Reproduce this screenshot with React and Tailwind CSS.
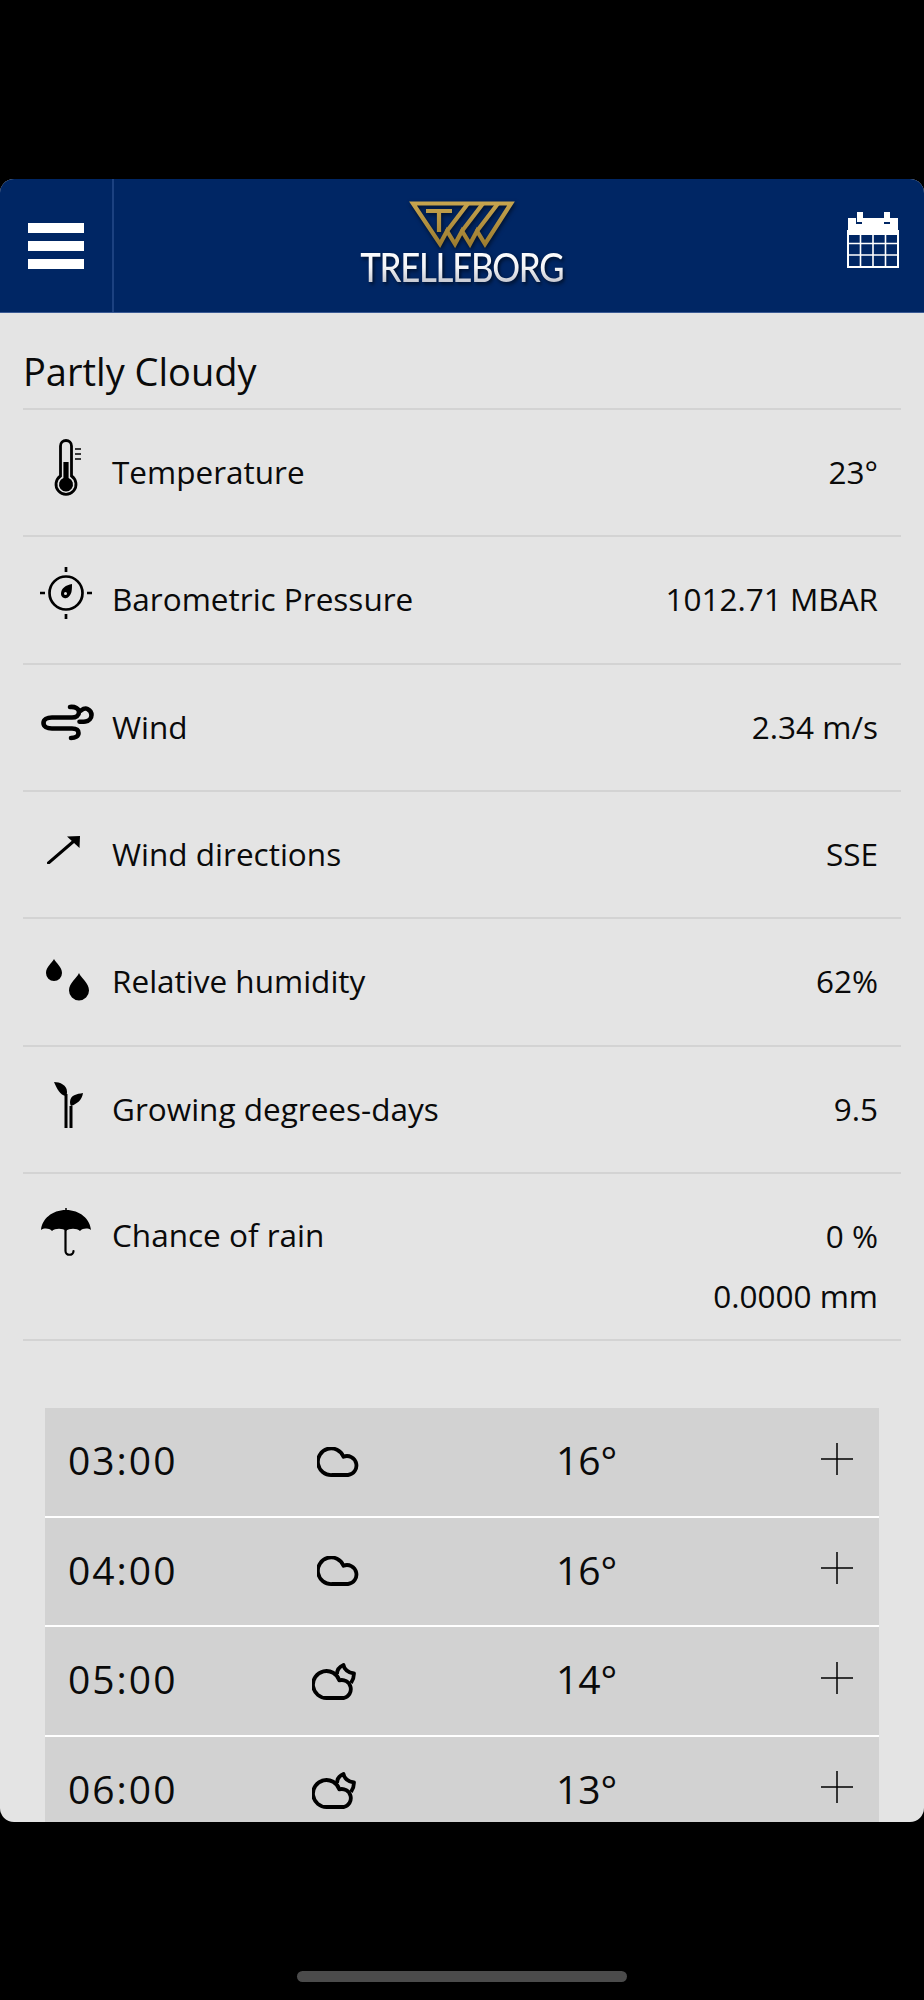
const FONT = "font-['Open_Sans',sans-serif]";

const metrics = [
  { id: 'temp', label: 'Temperature', value: ['23°'], h: 'h-[127px]', icon: <Thermometer /> },
  { id: 'baro', label: 'Barometric Pressure', value: ['1012.71 MBAR'], h: 'h-[128px]', icon: <Gauge /> },
  { id: 'wind', label: 'Wind', value: ['2.34 m/s'], h: 'h-[127px]', icon: <Wind /> },
  { id: 'dir', label: 'Wind directions', value: ['SSE'], h: 'h-[127px]', icon: <Arrow /> },
  { id: 'hum', label: 'Relative humidity', value: ['62%'], h: 'h-[128px]', icon: <Drops /> },
  { id: 'gdd', label: 'Growing degrees-days', value: ['9.5'], h: 'h-[127px]', icon: <Sprout /> },
];

const hours = [
  { time: '03:00', temp: '16°', icon: <Cloud /> },
  { time: '04:00', temp: '16°', icon: <Cloud /> },
  { time: '05:00', temp: '14°', icon: <CloudMoon /> },
  { time: '06:00', temp: '13°', icon: <CloudMoon /> },
];

function Thermometer() {
  return (
    <svg className="mb-[10px]" width="30" height="57" viewBox="0 0 30 57" fill="none" stroke="#000">
      <path d="M9.500 37V7a5.500 5.500 0 0 1 11 0v30a10 10 0 1 1-11 0Z" strokeWidth="2.800" />
      <path d="M12.400 23h5.200v15.900a7 7 0 1 1-5.200 0Z" fill="#000" stroke="none" />
      <path d="M24 10h6M24 15h6M24 20h6" strokeWidth="1.700" />
    </svg>
  );
}

function Gauge() {
  return (
    <svg className="mb-[14px]" width="54" height="54" viewBox="0 0 54 54" fill="none" stroke="#000">
      <circle cx="27" cy="27" r="16.500" strokeWidth="2.700" />
      <path d="M27 1v5M27 48v5M1 27h5M48 27h5" strokeWidth="2.700" />
      <path d="M33 18c-6 1-11 4-11 10a4.500 4.500 0 0 0 8 2.500c3-3 3-7 3-12.500Z" fill="#000" stroke="none" />
      <circle cx="26.500" cy="27.500" r="1.500" fill="#e4e4e4" stroke="none" />
    </svg>
  );
}

function Wind() {
  return (
    <svg className="mb-[10px] ml-[3px]" width="54" height="38" viewBox="0 0 54 38" fill="none" stroke="#000" strokeWidth="4.600" strokeLinecap="round">
      <path d="M29 3c5-.5 9 1.500 9 5s-3 5.500-7 5.500H11c-5 0-8.500 2-8.500 5.500S6 24.500 11 24.500h20c4 0 6.500 1.500 6.500 4.500s-3 5-7.500 5" />
      <path d="M40 6.500c2-1.500 4.500-2.500 6.500-1.500s4 3 4 6-2.500 6-6 6.500c-2 .3-4 .3-6 .2" />
    </svg>
  );
}

function Arrow() {
  return (
    <svg className="mb-[10px] mr-[5px]" width="33" height="28" viewBox="0 0 33 28" fill="none">
      <path d="M1.500 27 27 5" stroke="#000" strokeWidth="3" strokeLinecap="round" />
      <path d="M20 .5 33 0l-.5 12Z" fill="#000" />
    </svg>
  );
}

function Drops() {
  return (
    <svg className="ml-[4px] mb-[2px]" width="46" height="44" viewBox="0 0 46 44" fill="#000">
      <path d="M9 0c2 4 8 8 8 14a8 8 0 0 1-16 0C1 8 7 4 9 0Z" />
      <path d="M34 14c2 5 10 10 10 17.500a10 10 0 0 1-20 0c0-7.500 8-12.500 10-17.500Z" />
    </svg>
  );
}

function Sprout() {
  return (
    <svg className="mb-[10px] ml-[5px]" width="29" height="46" viewBox="0 0 29 46" fill="#000">
      <path d="M0 0c6 0 13 3 13 10 0 2-.5 3-1 4C6 13 3 7 0 0Z" />
      <path d="M29 11c-6 1-13 2-13 9 0 2 .5 3 1 4 6-2 11-6 12-13Z" />
      <path d="M10.500 12h3v34h-3zM15.500 24h3v22h-3z" />
    </svg>
  );
}

function Umbrella() {
  return (
    <svg width="52" height="50" viewBox="0 0 52 50" fill="none">
      <path d="M26 2C12 2 2 11 1 22c3-2 8-2 11 1 3-3 11-3 14 0 3-3 11-3 14 0 3-3 8-3 11-1C50 11 40 2 26 2Z" fill="#000" />
      <path d="M26 0v3" stroke="#000" strokeWidth="1.500" />
      <path d="M25.500 22v21c0 5 8 5 8 0" stroke="#000" strokeWidth="2.200" strokeLinecap="round" />
    </svg>
  );
}

function Cloud() {
  return (
    <svg className="ml-[2px]" width="42" height="30" viewBox="0 0 42 30" fill="none" stroke="#000" strokeWidth="3.800" strokeLinejoin="round">
      <path d="M15 28A13.300 13.300 0 1 1 26.500 9.700 9.500 9.500 0 1 1 31 28Z" />
    </svg>
  );
}

function CloudMoon() {
  return (
    <svg className="mr-[6px] mt-[1px]" width="44" height="37" viewBox="0 0 44 37" fill="none" stroke="#000" strokeWidth="3.800" strokeLinejoin="round">
      <path d="M15 35A13.500 13.500 0 1 1 27.300 17.300 9 9 0 1 1 32 35Z" />
      <path d="M25 11C25 7 28 3.500 31.500 2 32 6 36 10 42 10.500 42 14 41 17 39 20" />
    </svg>
  );
}

function Emblem() {
  return (
    <svg width="112" height="54" viewBox="0 0 112 54" fill="none" className="drop-shadow-[1px_2px_2px_rgba(0,0,0,0.6)]">
      <defs>
        <linearGradient id="gold" gradientUnits="userSpaceOnUse" x1="0" y1="2" x2="0" y2="50">
          <stop offset="0" stopColor="#c8a650" />
          <stop offset="1" stopColor="#9a7a2e" />
        </linearGradient>
      </defs>
      <g stroke="url(#gold)" strokeWidth="4.200" strokeLinejoin="miter" strokeLinecap="butt">
        <path d="M7 5.500H105L79 46 71 33 64 46 56 33 49 46 41 33 34 46Z" />
        <path d="M20 13H46M33 13V34" />
        <path d="M62 5.500 41 33M77 5.500 56 33M92 5.500 71 33" />
      </g>
    </svg>
  );
}

function Calendar() {
  return (
    <svg width="52" height="56" viewBox="0 0 52 56" fill="none">
      <path d="M1 6h8v6h6V6h22v6h6V6h8v17H1Z" fill="#fff" />
      <path d="M10 0h6v10h-6zM37 0h6v10h-6z" fill="#fff" />
      <path d="M1 19h50v36H1Z" stroke="#fff" strokeWidth="2" />
      <path d="M13.500 22v32M26 22v32M38.500 22v32M1 31.500h50M1 43h50" stroke="#fff" strokeWidth="1.600" />
    </svg>
  );
}

function Row({ icon, label, value, h }) {
  return (
    <div className={`${h} flex border-b-2 border-[#d3d3d3] pl-[7px] pr-[23px]`}>
      <div className="w-[82px] h-full flex items-center justify-center pr-[10px]">{icon}</div>
      <div className="flex-1 flex items-center justify-between pb-[2px] text-[31.500px] text-[#0a0a0a]">
        <span>{label}</span>
        {value.map((v) => <span key={v}>{v}</span>)}
      </div>
    </div>
  );
}

export default function App() {
  return (
    <div className={`${FONT} w-[924px] h-[2000px] bg-black pt-[179px] flex flex-col items-stretch`}>
      <div className="h-[1643px] rounded-[14px] overflow-hidden bg-[#e4e4e4] flex flex-col">
        <header className="h-[134px] shrink-0 bg-[#002664] border-b border-[#3a5a94] flex items-stretch">
          <div className="w-[114px] border-r-2 border-[#1c4180] flex flex-col justify-center gap-[8px] pl-[28px]">
            <div className="w-[56px] h-[10px] bg-white" />
            <div className="w-[56px] h-[10px] bg-white" />
            <div className="w-[56px] h-[10px] bg-white" />
          </div>
          <div className="flex-1 flex flex-col items-center pt-[19px] pr-[114px]">
            <Emblem />
            <span className="font-['Lato',sans-serif] font-medium text-[40px] leading-[40px] -tracking-[1.500px] scale-x-[0.87] -mt-[5px] bg-gradient-to-b from-white via-[#f4f5f8] to-[#b9bcc6] bg-clip-text text-transparent drop-shadow-[2px_2px_2px_rgba(0,0,0,0.6)]">TRELLEBORG</span>
          </div>
          <div className="w-[78px] flex items-start pt-[33px] pl-[1px] -ml-[78px]">
            <Calendar />
          </div>
        </header>
        <div className="px-[23px] flex-1 overflow-hidden">
          <h1 className="h-[97px] flex items-end pb-[12px] border-b-2 border-[#d3d3d3] text-[38px] leading-[50px] text-[#0a0a0a] font-normal">Partly Cloudy</h1>
          {metrics.map((m) => <Row key={m.id} {...m} />)}
          <div className="h-[167px] flex border-b-2 border-[#d3d3d3] pl-[7px] pr-[23px]">
            <div className="w-[82px] pt-[34px] pr-[10px] flex justify-center"><Umbrella /></div>
            <div className="flex-1 flex justify-between text-[31.500px] text-[#0a0a0a] pt-[37px]">
              <span>Chance of rain</span>
              <div className="text-right leading-[60px] -mt-[5px]">
                <div>0 %</div>
                <div>0.0000 mm</div>
              </div>
            </div>
          </div>
          <div className="mt-[67px] ml-[22px] mr-[22px] flex flex-col gap-[2px] bg-white">
            {hours.map((row) => (
              <div key={row.time} className="h-[107.500px] shrink-0 bg-[#d2d2d2] flex items-center text-[39px] text-[#0a0a0a]">
                <span className="w-[195px] pl-[23px] pb-[3px] tracking-[2px]">{row.time}</span>
                <div className="w-[194px] flex justify-center">{row.icon}</div>
                <span className="w-[100px] ml-[122px] pb-[3px]">{row.temp}</span>
                <svg className="ml-auto mr-[25px] mb-[6px]" width="34" height="34" viewBox="0 0 34 34" stroke="#000" strokeWidth="1.500"><path d="M17 1v32M1 17h32" /></svg>
              </div>
            ))}
          </div>
        </div>
      </div>
      <div className="w-[330px] h-[11px] mt-[149px] mx-auto rounded-full bg-[#4b4b4b]" />
    </div>
  );
}
